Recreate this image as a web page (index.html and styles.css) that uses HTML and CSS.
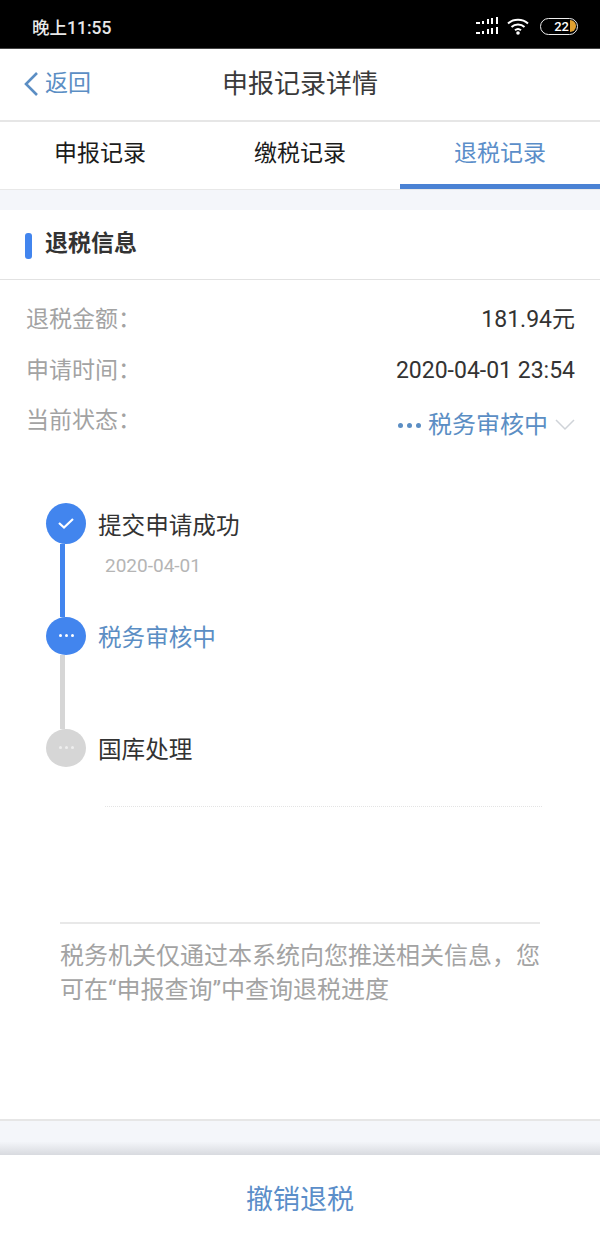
FILE: index.html
```html
<!DOCTYPE html>
<html lang="zh-CN">
<head>
    <meta charset="utf-8">
    <title>申报记录详情</title>
    <link rel="stylesheet" href="styles.css">
</head>
<body>
    <div class="status-bar">
        <span class="status-time">晚上11:55</span>
        <div class="status-icons">
            <svg class="signal" width="23" height="18" viewBox="0 0 23 18">
                <g fill="#fff">
                    <rect x="0" y="5" width="4" height="2"/><rect x="6" y="4" width="2" height="3"/><rect x="11" y="2" width="2" height="5"/><rect x="15" y="1" width="2" height="6"/><rect x="20" y="0" width="2" height="7"/>
                    <rect x="0" y="15" width="4" height="2"/><rect x="6" y="14" width="2" height="3"/><rect x="11" y="12" width="2" height="5"/><rect x="15" y="11" width="2" height="6"/><rect x="20" y="10" width="2" height="7"/>
                </g>
            </svg>
            <svg class="wifi" width="22" height="17" viewBox="0 0 22 17">
                <g fill="none" stroke="#fff" stroke-width="2">
                    <path d="M1 5.5C6.5 .5 15.500 .5 21 5.500"/>
                    <path d="M4.500 9C8 5.800 14 5.800 17.500 9"/>
                    <path d="M8 12.300C9.800 10.800 12.200 10.800 14 12.300"/>
                </g>
                <circle cx="11" cy="15" r="1.800" fill="#fff"/>
            </svg>
            <div class="battery">
                <span class="battery-num">22</span>
                <span class="battery-cap"></span>
            </div>
        </div>
    </div>

    <div class="nav-bar">
        <a class="nav-back">
            <svg width="16" height="26" viewBox="0 0 16 26">
                <path d="M14 2L3 13l11 11" fill="none" stroke="#5b8ec4" stroke-width="2.600"/>
            </svg>
            <span class="nav-back-text">返回</span>
        </a>
        <div class="nav-title">申报记录详情</div>
    </div>

    <div class="tabs">
        <div class="tab">申报记录</div>
        <div class="tab">缴税记录</div>
        <div class="tab tab-active">退税记录</div>
    </div>

    <div class="gap-top"></div>

    <div class="section-head">
        <span class="section-mark"></span>
        <span class="section-title">退税信息</span>
    </div>

    <div class="info">
        <div class="info-row">
            <span class="info-label">退税金额&#xFF1A;</span>
            <span class="info-value">181.94元</span>
        </div>
        <div class="info-row">
            <span class="info-label">申请时间&#xFF1A;</span>
            <span class="info-value">2020-04-01 23:54</span>
        </div>
        <div class="info-row">
            <span class="info-label">当前状态&#xFF1A;</span>
            <span class="info-status">
                <span class="status-dots"><i></i><i></i><i></i></span>
                <span>税务审核中</span>
                <svg width="20" height="12" viewBox="0 0 20 12">
                    <path d="M1 1l9 9 9-9" fill="none" stroke="#cfd3d8" stroke-width="1.500"/>
                </svg>
            </span>
        </div>
    </div>

    <div class="timeline">
        <div class="step step-first">
            <div class="step-rail">
                <span class="step-dot dot-blue dot-big">
                    <svg width="18" height="14" viewBox="0 0 18 14">
                        <path d="M2 7l5 4.500L16 3" fill="none" stroke="#fff" stroke-width="2.200"/>
                    </svg>
                </span>
                <span class="step-line line-blue"></span>
            </div>
            <div class="step-body">
                <div class="step-name step-name-first">提交申请成功</div>
                <div class="step-date">2020-04-01</div>
            </div>
        </div>
        <div class="step step-second">
            <div class="step-rail">
                <span class="step-dot dot-blue"><i></i><i></i><i></i></span>
                <span class="step-line line-grey"></span>
            </div>
            <div class="step-body">
                <div class="step-name step-name-active">税务审核中</div>
            </div>
        </div>
        <div class="step step-last">
            <div class="step-rail">
                <span class="step-dot dot-grey"><i></i><i></i><i></i></span>
            </div>
            <div class="step-body">
                <div class="step-name">国库处理</div>
            </div>
        </div>
    </div>

    <div class="dotted-line"></div>

    <div class="note">税务机关仅通过本系统向您推送相关信息&#xFF0C;您可在“申报查询”中查询退税进度</div>

    <div class="gap-bottom"></div>

    <div class="footer">撤销退税</div>
</body>
</html>
```

FILE: styles.css
```css
* {
    box-sizing: border-box;
}

html, body {
    margin: 0;
    padding: 0;
}

body {
    width: 600px;
    height: 1248px;
    background: #fff;
    color: #333;
    font-family: Roboto, "Noto Sans CJK SC", sans-serif;
    overflow: hidden;
}

/* status bar */
.status-bar {
    height: 49px;
    background: #000;
    display: flex;
    align-items: center;
    justify-content: space-between;
    padding: 4px 22px 0 32px;
    border-bottom: 1px solid #444;
}

.status-time {
    color: #e8e8e8;
    font-size: 17.500px;
    font-weight: 500;
}

.status-icons {
    display: flex;
    align-items: center;
}

.signal {
    margin-right: 8px;
}

.wifi {
    margin-right: 11px;
}

.battery {
    width: 38px;
    height: 17px;
    border: 1.500px solid #eee;
    border-radius: 9px;
    display: flex;
    align-items: center;
    justify-content: flex-end;
    overflow: hidden;
    padding-right: 1px;
}

.battery-num {
    color: #fff;
    font-size: 13px;
    font-weight: 500;
    margin-right: 1px;
}

.battery-cap {
    width: 6px;
    height: 12px;
    background: #e0a030;
    border-radius: 0 6px 6px 0;
}

/* nav bar */
.nav-bar {
    height: 73px;
    display: flex;
    align-items: center;
    justify-content: center;
    position: relative;
    padding-bottom: 1px;
    border-bottom: 2px solid #e6e6e6;
}

.nav-back {
    position: absolute;
    left: 23px;
    top: 21px;
    display: flex;
    align-items: center;
    gap: 6px;
    color: #5b8ec4;
    font-size: 23px;
}

.nav-back-text {
    line-height: 26px;
    margin-top: 1px;
}

.nav-title {
    font-size: 26px;
    color: #3a3a3a;
    line-height: 1;
}

/* tabs */
.tabs {
    height: 68px;
    display: flex;
    border-bottom: 1px solid #e8e8e8;
}

.tab {
    flex: 1;
    display: flex;
    align-items: center;
    justify-content: center;
    font-size: 23px;
    color: #1c1c1c;
    padding-bottom: 10px;
}

.tab-active {
    color: #5b8ec9;
    border-bottom: 5px solid #4a82d4;
    padding-bottom: 5px;
}

.gap-top {
    height: 20px;
    background: #f4f6fa;
}

/* section */
.section-head {
    height: 70px;
    display: flex;
    align-items: center;
    padding: 0 25px;
    border-bottom: 1px solid #e2e2e2;
}

.section-mark {
    width: 7px;
    height: 26px;
    border-radius: 3px;
    background: #4285ee;
    margin-right: 13px;
    margin-top: 3px;
}

.section-title {
    font-size: 23px;
    font-weight: 700;
    color: #333;
    margin-top: -7px;
}

.info {
    padding: 15px 25px 0 26px;
}

.info-row {
    height: 50.500px;
    display: flex;
    align-items: center;
    justify-content: space-between;
}

.info-label {
    font-size: 23px;
    line-height: 30px;
    color: #a3a3a3;
}

.info-value {
    font-size: 23px;
    line-height: 30px;
    color: #333;
}

.info-status {
    display: flex;
    align-items: center;
    color: #5b8ec4;
    font-size: 24px;
    line-height: 30px;
    margin-top: 8px;
}

.info-status svg {
    margin-left: 7px;
}

.status-dots {
    display: flex;
    gap: 4px;
    margin-right: 7px;
}

.status-dots i {
    width: 5px;
    height: 5px;
    border-radius: 50%;
    background: #5b8ec4;
}

/* timeline */
.timeline {
    margin-top: 56px;
    padding-left: 46px;
}

.step {
    display: flex;
}

.step-first {
    height: 114px;
}

.step-second {
    height: 112px;
}

.step-last {
    height: 40px;
}

.step-rail {
    width: 40px;
    display: flex;
    flex-direction: column;
    align-items: center;
    margin-right: 12px;
}

.step-dot {
    width: 40px;
    height: 38px;
    flex: none;
    border-radius: 50%;
    display: flex;
    align-items: center;
    justify-content: center;
    gap: 3px;
}

.dot-big {
    height: 41px;
}

.step-dot i {
    width: 3px;
    height: 3px;
    border-radius: 50%;
    background: #fff;
}

.dot-blue {
    background: #4285ee;
}

.dot-grey {
    background: #d6d6d6;
}

.dot-grey i {
    background: #eee;
}

/* the line sits left of the dot centre in the app */
.step-line {
    width: 5px;
    flex: 1;
    margin-right: 7px;
}

.line-blue {
    background: #4285ee;
}

.line-grey {
    background: #d6d6d6;
}

.step-name {
    font-size: 23.600px;
    line-height: 42px;
    color: #333;
}

.step-name-first {
    line-height: 46px;
}

.step-name-active {
    color: #5b8ec4;
}

.step-date {
    font-size: 19px;
    color: #b5b5b5;
    margin: 5px 0 0 7px;
    line-height: 24px;
}

.dotted-line {
    margin: 37px 58px 0 105px;
    border-top: 1px dotted #e4e4e4;
}

.note {
    margin: 115px 60px 0;
    padding-top: 15px;
    border-top: 2px solid #e8e8e8;
    font-size: 24px;
    line-height: 34px;
    color: #a3a3a3;
    height: 197px;
}

.gap-bottom {
    height: 36px;
    border-top: 2px solid #e6e6e6;
    background: linear-gradient(#f4f6fa 60%, #d8dadf);
}

.footer {
    height: 93px;
    display: flex;
    align-items: center;
    justify-content: center;
    font-size: 27px;
    color: #5b8ec9;
    padding-bottom: 8px;
}
```
